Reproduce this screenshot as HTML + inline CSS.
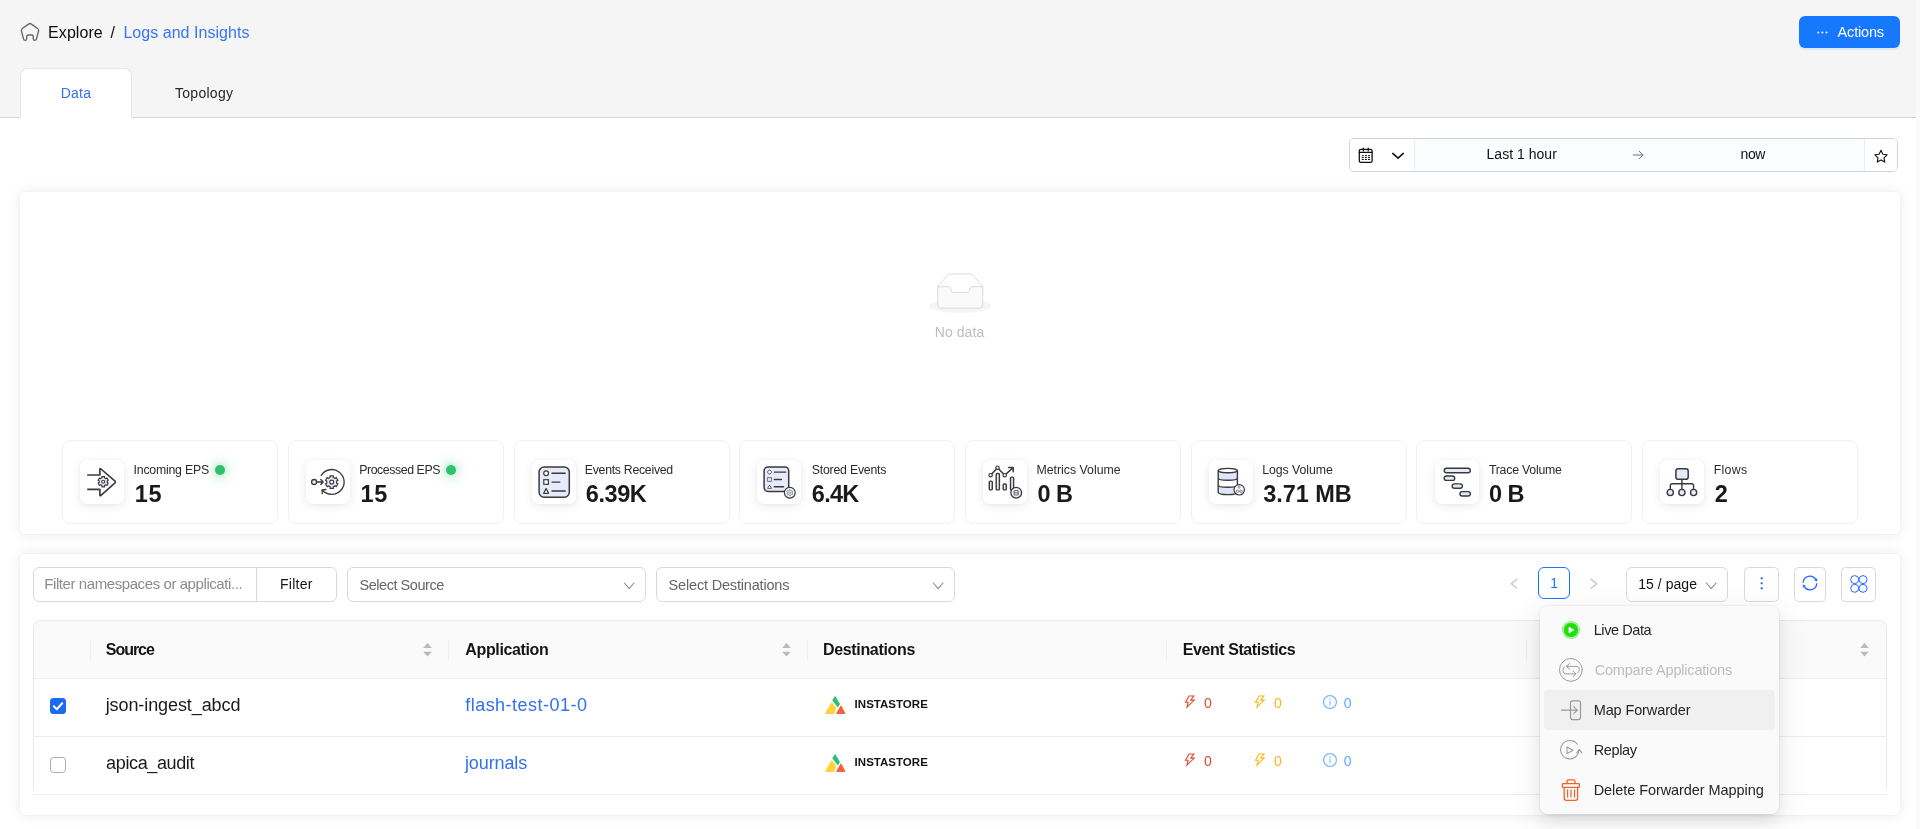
<!DOCTYPE html>
<html lang="en">
<head>
<meta charset="utf-8">
<title>Logs and Insights</title>
<style>
*{box-sizing:border-box;margin:0;padding:0}
html,body{width:1920px;height:829px;overflow:hidden;background:#fff}
body{font-family:"Liberation Sans",sans-serif;color:#1f1f1f;font-size:14px;position:relative}
#root{position:absolute;left:0;top:0;width:1920px;height:829px;will-change:transform}
.abs{position:absolute}
.t{position:absolute;white-space:nowrap;line-height:1}
#hdr{left:0;top:0;width:1920px;height:118px;background:#f5f5f5;border-bottom:1px solid #d4d4d4}
#actions{left:1799px;top:16px;width:101px;height:32px;background:#1677ff;border-radius:6px;box-shadow:0 2px 0 rgba(5,145,255,.1)}
#tab1{left:20px;top:68px;width:112px;height:50px;background:#fff;border:1px solid #e4e4e4;border-bottom:none;border-radius:8px 8px 0 0}
#dp{left:1349px;top:138px;width:549px;height:34px;border:1px solid #cbd3e8;border-radius:5px;background:#fbfcfe;overflow:hidden}
#dp .l{left:0;top:0;width:65px;height:32px;background:#fff;border-right:1px solid #e9ebf1}
#dp .r{left:514px;top:0;width:34px;height:32px;background:#fff;border-left:1px solid #ececec}
.card{background:#fff;border-radius:5px;box-shadow:0 0 14px rgba(0,0,0,.088),0 0 2px rgba(0,0,0,.07)}
#c1{left:20px;top:192px;width:1880px;height:342px}
#c2{left:20px;top:554px;width:1880px;height:261px}

.stat{position:absolute;top:440px;width:216px;height:84px;border:1px solid #f0f0f0;border-radius:8px;background:#fff}
.stat .ib{position:absolute;left:17px;top:19px;width:44px;height:44px;border-radius:7px;background:#fff;box-shadow:0 2px 10px rgba(0,0,0,.09),0 0 2px rgba(0,0,0,.04)}
.stat .ib svg{display:block}
.stat .lb{position:absolute;left:70.4px;top:22.6px;font-size:12.3px;line-height:1;color:#2b2b2b;white-space:nowrap}
.stat .vl{position:absolute;left:71.5px;top:42.0px;font-size:23.5px;line-height:1;font-weight:700;color:#1a1a1a;white-space:nowrap}
.dot{position:absolute;width:10.300px;height:10.300px;border-radius:50%;background:#2ec26d;box-shadow:0 0 12px 5px rgba(46,194,109,.16),0 0 5px 1px rgba(46,194,109,.20)}

.box{position:absolute;border:1px solid #d9d9d9;border-radius:6px;background:#fff}
#tbl{left:33px;top:620px;width:1854px;height:170px;border:1px solid #e6e8f3;border-bottom:none;border-radius:8px 8px 0 0}
#th{left:0;top:0;width:1852px;height:58px;background:#fafafa;border-bottom:1px solid #ededed;border-radius:7px 7px 0 0}
.hsep{position:absolute;top:17.5px;width:1px;height:22.5px;background:#f0f0f0}
.row{position:absolute;left:0;width:1852px;height:58px;border-bottom:1px solid #ededed;background:#fff}
.sorter{position:absolute;top:22px;width:9px;height:14px}
#dd{left:1540px;top:606px;width:239px;height:208px;background:#fafafa;border-radius:8px;box-shadow:0 6px 16px rgba(0,0,0,.08),0 3px 6px -4px rgba(0,0,0,.12),0 9px 28px 8px rgba(0,0,0,.05),0 0 3px rgba(0,0,0,.10)}
.mi{position:absolute;left:4px;width:231px;height:40px;border-radius:4px}
</style>
</head>
<body>
<div id="root">
<div id="hdr" class="abs"></div>
<div class="abs" style="left:1916px;top:0;width:4px;height:829px;background:#f9f9f9;z-index:50"></div>
<div id="tab1" class="abs"></div>
<svg class="abs" style="left:0;top:0" width="60" height="60" viewBox="0 0 60 60" fill="none" stroke="#646464" stroke-width="1.350" stroke-linejoin="round"><path d="M28.600 24.100Q30 23 31.400 24.100L37.400 28.300Q38.900 29.300 38.600 30.800L36.500 38.800Q36.100 40.400 34.700 40.400Q33.300 40.400 33.300 38.800L33.300 36.600Q33.300 35 31.700 35L28.300 35Q26.700 35 26.700 36.600L26.700 38.800Q26.700 40.400 25.300 40.400Q23.900 40.400 23.500 38.800L21.400 30.800Q21.100 29.300 22.600 28.300Z"/></svg>
<div class="t" style="left:48.1px;top:24.5px;font-size:16px;letter-spacing:0.06px;color:#0d0d0d;">Explore</div>
<div class="t" style="left:110.6px;top:24.5px;font-size:16px;color:#0d0d0d;">/</div>
<div class="t" style="left:123.4px;top:24.5px;font-size:16px;letter-spacing:0.04px;color:#3875f4;">Logs and Insights</div>
<div id="actions" class="abs"></div>
<svg class="abs" style="left:1814.600px;top:29px" width="16" height="8" viewBox="0 0 16 8"><circle cx="3.300" cy="3.500" r=".95" fill="#fff"/><circle cx="7.400" cy="3.500" r=".95" fill="#fff"/><circle cx="11.500" cy="3.500" r=".95" fill="#fff"/></svg>
<div class="t" style="left:1837.6px;top:25.2px;font-size:14.5px;letter-spacing:-0.17px;color:#fff;">Actions</div>
<div class="t" style="left:60.7px;top:86.1px;font-size:14px;letter-spacing:0.24px;color:#3570f2;">Data</div>
<div class="t" style="left:175.0px;top:86.1px;font-size:14px;letter-spacing:0.28px;color:#262626;">Topology</div>

<div id="dp" class="abs">
  <div class="l abs"></div><div class="r abs"></div>
  <svg class="abs" style="left:-.8px;top:.2px" width="66" height="32" viewBox="0 0 66 32" fill="none" stroke="#111" stroke-linecap="round" stroke-linejoin="round">
    <rect x="10.300" y="10.400" width="12.800" height="13" rx="1.600" stroke-width="1.300"/>
    <path d="M10.300 13.400h12.800M14.300 9.200v2.600M19.200 9.200v2.600" stroke-width="1.300"/>
    <path d="M12.800 16.700h2M15.900 16.700h2M19 16.700h2M12.800 18.600h2M15.900 18.600h2M19 18.600h2M12.800 20.500h2M15.900 20.500h2M19 20.500h2" stroke-width="1" stroke-linecap="butt"/>
    <path d="M43.800 14.400L49.050 19.100L54.300 14.400" stroke-width="1.550"/>
  </svg>
  <svg class="abs" style="left:281px;top:9px" width="14" height="14" viewBox="0 0 14 14" fill="none" stroke="#6b7280" stroke-width="1" stroke-linecap="round" stroke-linejoin="round"><path d="M2.200 7h9.800M8.200 3.200L12 7L8.200 10.800"/></svg>
  <svg class="abs" style="left:523px;top:10px" width="16" height="16" viewBox="0 0 16 16" fill="none" stroke="#111" stroke-width="1.100" stroke-linejoin="round"><path d="M8 1.300l1.850 3.950 4.250.550-3.100 3 .780 4.300L8 11l-3.780 2.100.780-4.300-3.100-3 4.250-.550z"/></svg>
</div>
<div class="t" style="left:1486.5px;top:147.1px;font-size:14px;letter-spacing:0.03px;color:#111;">Last 1 hour</div>
<div class="t" style="left:1740.6px;top:147.1px;font-size:14px;letter-spacing:-0.44px;color:#111;">now</div>

<div id="c1" class="abs card"></div>
<svg class="abs" style="left:928.800px;top:272.600px" width="62.440" height="40" viewBox="0 0 64 41"><g transform="translate(0 1)" fill="none" fill-rule="evenodd"><ellipse fill="#f5f5f5" cx="32" cy="33" rx="32" ry="7"/><g fill-rule="nonzero" stroke="#d9d9d9"><path d="M55 12.760L44.854 1.258C44.367.474 43.656 0 42.907 0H21.093c-.749 0-1.460.474-1.947 1.257L9 12.761V22h46v-9.240z"/><path d="M41.613 15.931c0-1.605.994-2.930 2.227-2.931H55v18.137C55 33.260 53.680 35 52.050 35h-40.100C10.320 35 9 33.259 9 31.137V13h11.160c1.233 0 2.227 1.323 2.227 2.928v.022c0 1.605 1.005 2.901 2.237 2.901h14.752c1.232 0 2.237-1.308 2.237-2.913v-.007z" fill="#fafafa"/></g></g></svg>
<div class="t" style="left:934.8px;top:325.1px;font-size:14px;letter-spacing:0.06px;color:#bdbdbd;">No data</div>
<div class="stat" style="left:62px"><div class="ib" style="left:17px"><svg width="44" height="44" viewBox="0 0 44 44"><path d="M7.200 15H19.900V9.400Q19.900 8 21 9L35 21.200Q35.800 22 35 22.800L21 35.300Q19.900 36.200 19.900 34.900V29.300H7.200" stroke="#3a3a3a" stroke-width="1.650" fill="none" stroke-linejoin="round" stroke-linecap="butt"/>
<path d="M21.79 16.59L24.61 16.59L24.43 17.79L25.98 18.68L26.92 17.92L28.33 20.37L27.20 20.81L27.20 22.59L28.33 23.03L26.92 25.48L25.98 24.72L24.43 25.61L24.61 26.81L21.79 26.81L21.97 25.61L20.42 24.72L19.48 25.48L18.07 23.03L19.20 22.59L19.20 20.81L18.07 20.37L19.48 17.92L20.42 18.68L21.97 17.79Z" fill="#e6ebfc" stroke="#3a3a3a" stroke-width="1.150" stroke-linejoin="round"/><circle cx="23.200" cy="21.700" r="1.500" fill="#fff" stroke="#3a3a3a" stroke-width="1.100"/></svg></div><div class="lb" style="left:70.6px;letter-spacing:-0.22px">Incoming EPS</div><div class="dot" style="left:151.8px;top:23.800px"></div><div class="vl" style="left:71.8px;letter-spacing:0.63px">15</div></div>
<div class="stat" style="left:288px"><div class="ib" style="left:17px"><svg width="44" height="44" viewBox="0 0 44 44"><circle cx="8.100" cy="22" r="2.500" fill="#e6ebfc" stroke="#3a3a3a" stroke-width="1.300"/>
<path d="M10.800 22H17M14.800 19.600L17.200 22L14.800 24.400" stroke="#3a3a3a" stroke-width="1.400" fill="none" stroke-linejoin="round" stroke-linecap="round"/>
<path d="M15.200 15.400A12.400 12.400 0 1 1 16.300 30" stroke="#3a3a3a" stroke-width="1.300" fill="none" stroke-linecap="round"/>
<path d="M19.900 29.500L16.100 29.800L16.200 33.700" stroke="#3a3a3a" stroke-width="1.300" fill="none" stroke-linecap="round" stroke-linejoin="round"/>
<path d="M23.97 15.84L27.43 15.84L27.19 17.33L29.08 18.42L30.26 17.47L31.99 20.47L30.58 21.01L30.58 23.19L31.99 23.73L30.26 26.73L29.08 25.78L27.19 26.87L27.43 28.36L23.97 28.36L24.21 26.87L22.32 25.78L21.14 26.73L19.41 23.73L20.82 23.19L20.82 21.01L19.41 20.47L21.14 17.47L22.32 18.42L24.21 17.33Z" fill="#e6ebfc" stroke="#3a3a3a" stroke-width="1.200" stroke-linejoin="round"/><circle cx="25.700" cy="22.100" r="2" fill="#fff" stroke="#3a3a3a" stroke-width="1.100"/></svg></div><div class="lb" style="left:70.2px;letter-spacing:-0.41px">Processed EPS</div><div class="dot" style="left:157.1px;top:23.800px"></div><div class="vl" style="left:71.5px;letter-spacing:0.63px">15</div></div>
<div class="stat" style="left:514px"><div class="ib" style="left:17px"><svg width="44" height="44" viewBox="0 0 44 44"><rect x="7.100" y="7" width="30.200" height="30.200" rx="5" fill="#e6ebfc" stroke="#3a3a3a" stroke-width="1.500"/>
<circle cx="14.100" cy="13.300" r="2.400" fill="#fff" stroke="#3a3a3a" stroke-width="1.200"/>
<rect x="11.800" y="19.700" width="4.600" height="4.600" fill="#fff" stroke="#3a3a3a" stroke-width="1.200"/>
<path d="M14.100 28.600L16.600 33.300H11.600Z" fill="#fff" stroke="#3a3a3a" stroke-width="1.200" stroke-linejoin="round"/>
<path d="M20 13.300H33.200M20 22.100H27.800M20 31H33.200" stroke="#3a3a3a" stroke-width="1.400" stroke-linecap="round"/></svg></div><div class="lb" style="left:69.8px;letter-spacing:-0.28px">Events Received</div><div class="vl" style="left:70.8px;letter-spacing:-0.43px">6.39K</div></div>
<div class="stat" style="left:739px"><div class="ib" style="left:17px"><svg width="44" height="44" viewBox="0 0 44 44"><rect x="7.100" y="7" width="24.600" height="24.400" rx="3.800" fill="#e6ebfc" stroke="#3a3a3a" stroke-width="1.500"/>
<circle cx="12.500" cy="12.100" r="1.900" fill="#fff" stroke="#555" stroke-width=".9"/>
<rect x="10.700" y="17.700" width="3.600" height="3.600" fill="#fff" stroke="#555" stroke-width=".9"/>
<path d="M12.500 25L14.500 28.400H10.500Z" fill="#fff" stroke="#555" stroke-width=".9" stroke-linejoin="round"/>
<path d="M17.300 12.100H28.700M17.300 19.500H24.400M17.300 26.800H26.500" stroke="#3a3a3a" stroke-width="1.400" stroke-linecap="round"/>
<circle cx="32.800" cy="32.700" r="5.400" fill="#fff" stroke="#3a3a3a" stroke-width="1.200"/>
<path d="M31.95 29.62L33.65 29.62L33.52 30.41L34.42 30.93L35.04 30.42L35.90 31.90L35.14 32.18L35.14 33.22L35.90 33.50L35.04 34.98L34.42 34.47L33.52 34.99L33.65 35.78L31.95 35.78L32.08 34.99L31.18 34.47L30.56 34.98L29.70 33.50L30.46 33.22L30.46 32.18L29.70 31.90L30.56 30.42L31.18 30.93L32.08 30.41Z" fill="#e6ebfc" stroke="#777" stroke-width=".7" stroke-linejoin="round"/><circle cx="32.800" cy="32.700" r=".9" fill="#fff" stroke="#777" stroke-width=".6"/></svg></div><div class="lb" style="left:71.8px;letter-spacing:-0.22px">Stored Events</div><div class="vl" style="left:71.8px;letter-spacing:-0.72px">6.4K</div></div>
<div class="stat" style="left:965px"><div class="ib" style="left:17px"><svg width="44" height="44" viewBox="0 0 44 44"><rect x="6.300" y="21.100" width="3" height="8.800" rx="1" fill="#e6ebfc" stroke="#3a3a3a" stroke-width="1.400"/>
<rect x="13.200" y="13.500" width="3.200" height="16.400" rx="1" fill="#e6ebfc" stroke="#3a3a3a" stroke-width="1.400"/>
<rect x="20.200" y="24" width="3.100" height="5.900" rx="1" fill="#e6ebfc" stroke="#3a3a3a" stroke-width="1.400"/>
<rect x="27.500" y="17.100" width="3.100" height="12.800" rx="1" fill="#e6ebfc" stroke="#3a3a3a" stroke-width="1.400"/>
<path d="M8.700 14.100L13.400 8.900M15.700 8.900L20.600 14.100M22.900 14.100L30 7.700M25.700 7.500H30.200V11.800" stroke="#3a3a3a" stroke-width="1.500" fill="none" stroke-linecap="round" stroke-linejoin="round"/>
<circle cx="7.600" cy="15.200" r="1.700" fill="#fff" stroke="#3a3a3a" stroke-width="1.200"/><circle cx="14.500" cy="7.700" r="1.700" fill="#fff" stroke="#3a3a3a" stroke-width="1.200"/><circle cx="21.700" cy="15.200" r="1.700" fill="#fff" stroke="#3a3a3a" stroke-width="1.200"/>
<circle cx="33.200" cy="32.700" r="5.400" fill="#e6ebfc" stroke="#3a3a3a" stroke-width="1.300"/>
<path d="M31.200 30.700h4v4.200h-4zM31.200 32.800h4" fill="#fff" stroke="#555" stroke-width=".9" stroke-linejoin="round"/></svg></div><div class="lb" style="left:70.5px;letter-spacing:0.00px">Metrics Volume</div><div class="vl" style="left:71.5px;letter-spacing:-0.55px">0 B</div></div>
<div class="stat" style="left:1191px"><div class="ib" style="left:17px"><svg width="44" height="44" viewBox="0 0 44 44"><path d="M9.200 10.600V32.200C9.200 33.600 13.500 34.600 18.800 34.600S28.400 33.600 28.400 32.200V10.600" fill="#fff" stroke="none"/>
<path d="M9.200 11V18C9.200 19.300 13.500 20.300 18.800 20.300S28.400 19.300 28.400 18V11C28.400 12.300 24 13.100 18.800 13.100S9.200 12.300 9.200 11Z" fill="#dfe6fa"/>
<path d="M9.200 25V32.200C9.200 33.600 13.500 34.600 18.800 34.600S28.400 33.600 28.400 32.200V25C28.400 26.300 24 27.300 18.800 27.300S9.200 26.300 9.200 25Z" fill="#dfe6fa"/>
<ellipse cx="18.800" cy="10.600" rx="9.600" ry="2.200" fill="#fff" stroke="#3a3a3a" stroke-width="1.400"/>
<path d="M9.200 10.600V32.200C9.200 33.600 13.500 34.600 18.800 34.600S28.400 33.600 28.400 32.200V10.600M9.200 18C9.200 19.300 13.500 20.300 18.800 20.300S28.400 19.300 28.400 18M9.200 25C9.200 26.300 13.500 27.300 18.800 27.300S28.400 26.300 28.400 25" fill="none" stroke="#3a3a3a" stroke-width="1.400"/>
<circle cx="30.200" cy="29.800" r="5.200" fill="#fff" stroke="#3a3a3a" stroke-width="1.200"/>
<circle cx="30.200" cy="27.300" r="1" fill="#e6ebfc" stroke="#666" stroke-width=".7"/><circle cx="28.400" cy="31.200" r="1.300" fill="#e6ebfc" stroke="#666" stroke-width=".7"/><circle cx="32" cy="31.200" r="1.300" fill="#e6ebfc" stroke="#666" stroke-width=".7"/><path d="M29.700 31.200h1" stroke="#666" stroke-width=".7"/></svg></div><div class="lb" style="left:70.2px;letter-spacing:-0.05px">Logs Volume</div><div class="vl" style="left:71.2px;letter-spacing:-0.06px">3.71 MB</div></div>
<div class="stat" style="left:1416px"><div class="ib" style="left:18px"><svg width="44" height="44" viewBox="0 0 44 44"><rect x="9.200" y="8.200" width="26.100" height="4.600" rx="2.300" fill="#e6ebfc" stroke="#3a3a3a" stroke-width="1.400"/>
<rect x="9.200" y="16" width="10.500" height="4.400" rx="2.200" fill="#e6ebfc" stroke="#3a3a3a" stroke-width="1.400"/>
<rect x="17.200" y="23.900" width="10.200" height="4.400" rx="2.200" fill="#e6ebfc" stroke="#3a3a3a" stroke-width="1.400"/>
<rect x="24.900" y="31.600" width="10.400" height="4.400" rx="2.200" fill="#e6ebfc" stroke="#3a3a3a" stroke-width="1.400"/></svg></div><div class="lb" style="left:71.9px;letter-spacing:-0.22px">Trace Volume</div><div class="vl" style="left:72.0px;letter-spacing:-0.55px">0 B</div></div>
<div class="stat" style="left:1642px"><div class="ib" style="left:17px"><svg width="44" height="44" viewBox="0 0 44 44"><path d="M21.900 19.500V29.200M10.300 29.200V25.800Q10.300 23.800 12.300 23.800H31.600Q33.600 23.800 33.600 25.800V29.200" fill="none" stroke="#3a3a3a" stroke-width="1.400"/>
<rect x="15.900" y="8.700" width="12.300" height="10.600" rx="2.400" fill="#e6ebfc" stroke="#3a3a3a" stroke-width="1.500"/>
<circle cx="10.300" cy="32.500" r="3.100" fill="#e6ebfc" stroke="#3a3a3a" stroke-width="1.400"/><circle cx="21.900" cy="32.500" r="3.100" fill="#e6ebfc" stroke="#3a3a3a" stroke-width="1.400"/><circle cx="33.600" cy="32.500" r="3.100" fill="#e6ebfc" stroke="#3a3a3a" stroke-width="1.400"/></svg></div><div class="lb" style="left:70.7px;letter-spacing:0.31px">Flows</div><div class="vl" style="left:71.7px;letter-spacing:-0.50px">2</div></div>

<div id="c2" class="abs card"></div>
<!-- controls -->
<div class="box" style="left:33px;top:567px;width:224px;height:35px;border-radius:6px 0 0 6px"></div>
<div class="box" style="left:256px;top:567px;width:81px;height:35px;border-radius:0 6px 6px 0"></div>
<div class="t" style="left:44.3px;top:576.1px;font-size:15px;letter-spacing:-0.42px;color:#8b8b8b;">Filter namespaces or applicati...</div>
<div class="t" style="left:280.0px;top:577.1px;font-size:14px;letter-spacing:0.25px;color:#141414;">Filter</div>
<div class="box" style="left:347px;top:567px;width:298.500px;height:35px"></div>
<div class="t" style="left:359.5px;top:577.7px;font-size:14.5px;letter-spacing:-0.46px;color:#666;">Select Source</div>
<svg class="abs" style="left:623px;top:581px" width="12" height="10" viewBox="0 0 12 10" fill="none" stroke="#8c8c8c" stroke-width="1.100" stroke-linecap="round" stroke-linejoin="round"><path d="M1.400 2L6.200 7.600L11 2"/></svg>
<div class="box" style="left:656px;top:567px;width:298.500px;height:35px"></div>
<div class="t" style="left:668.6px;top:577.7px;font-size:14.5px;letter-spacing:-0.18px;color:#666;">Select Destinations</div>
<svg class="abs" style="left:932px;top:581px" width="12" height="10" viewBox="0 0 12 10" fill="none" stroke="#8c8c8c" stroke-width="1.100" stroke-linecap="round" stroke-linejoin="round"><path d="M1.400 2L6.200 7.600L11 2"/></svg>

<svg class="abs" style="left:1508px;top:576px" width="12" height="16" viewBox="0 0 12 16" fill="none" stroke="#bfbfbf" stroke-width="1.100" stroke-linecap="round" stroke-linejoin="round"><path d="M9 3.200L3.200 7.800L9 12.400"/></svg>
<div class="box" style="left:1538px;top:567px;width:32px;height:32px;border-color:#1677ff"></div>
<div class="t" style="left:1550.3px;top:576.1px;font-size:14px;color:#1677ff;">1</div>
<svg class="abs" style="left:1588px;top:576px" width="12" height="16" viewBox="0 0 12 16" fill="none" stroke="#bfbfbf" stroke-width="1.100" stroke-linecap="round" stroke-linejoin="round"><path d="M3 3.200L8.800 7.800L3 12.400"/></svg>
<div class="box" style="left:1626px;top:567px;width:101.500px;height:35px"></div>
<div class="t" style="left:1638.2px;top:576.9px;font-size:14px;letter-spacing:0.05px;color:#141414;">15 / page</div>
<svg class="abs" style="left:1705px;top:581px" width="12" height="10" viewBox="0 0 12 10" fill="none" stroke="#8c8c8c" stroke-width="1.100" stroke-linecap="round" stroke-linejoin="round"><path d="M1.400 2L6.200 7.600L11 2"/></svg>
<div class="box" style="left:1744px;top:567px;width:35px;height:35px;border-radius:4.500px"></div>
<svg class="abs" style="left:1755px;top:575px" width="12" height="18" viewBox="0 0 12 18"><circle cx="6.700" cy="3.300" r="1.150" fill="#1d63ff"/><circle cx="6.700" cy="8.300" r="1.150" fill="#1d63ff"/><circle cx="6.700" cy="13.300" r="1.150" fill="#1d63ff"/></svg>
<div class="box" style="left:1794px;top:567px;width:32px;height:35px;border-radius:4.500px"></div>
<svg class="abs" style="left:1800px;top:574px" width="20" height="20" viewBox="0 0 20 20" fill="none" stroke="#2468ff" stroke-width="1.300" stroke-linecap="butt"><path d="M3.20 8.76A6.8 6.8 0 0 1 15.77 5.40M16.80 9.24A6.8 6.8 0 0 1 4.23 12.60"/><path d="M17.14 7.60L17.22 4.14L14.00 6.15ZM2.86 10.40L2.78 13.86L6.00 11.85Z" fill="#2468ff" stroke="none"/></svg>
<div class="box" style="left:1841px;top:567px;width:35px;height:35px;border-radius:4.500px"></div>
<svg class="abs" style="left:1848px;top:574px" width="20" height="20" viewBox="0 0 20 20" fill="none" stroke="#2468ff" stroke-width="1"><circle cx="6.700" cy="5.600" r="4"/><circle cx="15" cy="5.600" r="4"/><circle cx="6.700" cy="14.300" r="4"/><circle cx="15" cy="14.300" r="4"/></svg>

<!-- table -->
<div id="tbl" class="abs">
  <div id="th" class="abs"></div>
  <div class="hsep" style="left:55.500px"></div><div class="hsep" style="left:414.300px"></div><div class="hsep" style="left:773.300px"></div><div class="hsep" style="left:1132.300px"></div><div class="hsep" style="left:1491.500px"></div>
  <svg class="sorter" style="left:388.500px" viewBox="0 0 9 14"><path d="M4.500 0L8.800 5H.2Z" fill="#b9b9b9"/><path d="M4.500 13.500L8.800 8.700H.2Z" fill="#b9b9b9"/></svg>
  <svg class="sorter" style="left:747.500px" viewBox="0 0 9 14"><path d="M4.500 0L8.800 5H.2Z" fill="#b9b9b9"/><path d="M4.500 13.500L8.800 8.700H.2Z" fill="#b9b9b9"/></svg>
  <svg class="sorter" style="left:1825.500px" viewBox="0 0 9 14"><path d="M4.500 0L8.800 5H.2Z" fill="#b9b9b9"/><path d="M4.500 13.500L8.800 8.700H.2Z" fill="#b9b9b9"/></svg>
  <div class="row" style="top:58px"></div>
  <div class="row" style="top:116px"></div>
</div>
<div class="t" style="left:105.8px;top:642.1px;font-size:16px;font-weight:700;letter-spacing:-1.03px;color:#141414;">Source</div>
<div class="t" style="left:465.3px;top:642.1px;font-size:16px;font-weight:700;letter-spacing:-0.36px;color:#141414;">Application</div>
<div class="t" style="left:823.0px;top:642.1px;font-size:16px;font-weight:700;letter-spacing:-0.34px;color:#141414;">Destinations</div>
<div class="t" style="left:1182.7px;top:642.1px;font-size:16px;font-weight:700;letter-spacing:-0.42px;color:#141414;">Event Statistics</div>
<div class="abs" style="left:50px;top:698px;width:16px;height:16px;border-radius:3.500px;background:#1a6bf2"></div><svg class="abs" style="left:50px;top:698px" width="16" height="16" viewBox="0 0 16 16" fill="none" stroke="#fff" stroke-width="2" stroke-linecap="round" stroke-linejoin="round"><path d="M3.800 8.300L6.800 11.200L12.200 5.300"/></svg>
<div class="t" style="left:105.7px;top:695.5px;font-size:18px;letter-spacing:-0.09px;color:#1a1a1a;">json-ingest_abcd</div>
<div class="t" style="left:465.2px;top:695.5px;font-size:18px;letter-spacing:0.48px;color:#3370ef;">flash-test-01-0</div>
<svg class="abs" style="left:824.500px;top:695.8px" width="21" height="19" viewBox="0 0 21 19"><path d="M9.600 .5Q10.100 -.1 10.500 .6L14.700 7.400Q15 7.900 14.700 8.400L13.200 11.100Q12.800 11.700 12.400 11.100L7.600 4.700Q7.300 4.200 7.600 3.700Z" fill="#2fbf71"/><path d="M6.300 6.600Q6.800 5.800 7.300 6.500L11 12.100Q11.300 12.600 11 13.100L9 17.400Q8.700 17.900 8.100 17.900H.9Q-.2 17.900 .3 16.900Z" fill="#fed13d"/><path d="M15.500 9.800Q16 9.100 16.400 9.800L20.200 17Q20.600 17.900 19.700 17.900H11.800Q10.800 17.900 11.300 17Z" fill="#f1643a"/></svg>
<div class="t" style="left:854.6px;top:699.1px;font-size:11.5px;font-weight:700;letter-spacing:0.02px;color:#141414;">INSTASTORE</div>
<svg class="abs" style="left:1183.1px;top:694.8px" width="14" height="14" viewBox="64 64 896 896" fill="#e24a2e"><path d="M848 359.300H627.700L825.800 109c4.100-5.300.400-13-6.300-13H436c-2.800 0-5.500 1.500-6.900 4L170 547.500c-3.100 5.300.700 12 6.900 12h174.400l-89.400 357.600c-1.900 7.800 7.500 13.300 13.300 7.700L853.500 373c5.200-4.900 1.700-13.700-5.500-13.700zM378.200 732.500l60.300-241H281.100l189.600-327.400h224.600L487 427.400h211L378.200 732.500z"/></svg>
<svg class="abs" style="left:1252.8px;top:694.8px" width="14" height="14" viewBox="64 64 896 896" fill="#fbb616"><path d="M848 359.300H627.700L825.800 109c4.100-5.300.400-13-6.300-13H436c-2.800 0-5.500 1.500-6.900 4L170 547.500c-3.100 5.300.700 12 6.900 12h174.400l-89.400 357.600c-1.900 7.800 7.500 13.300 13.300 7.700L853.500 373c5.200-4.900 1.700-13.700-5.500-13.700zM378.200 732.500l60.300-241H281.100l189.600-327.400h224.600L487 427.400h211L378.200 732.500z"/></svg>
<div class="t" style="left:1204.0px;top:696.0px;font-size:14px;color:#e24a2e;">0</div>
<div class="t" style="left:1274.0px;top:696.0px;font-size:14px;color:#fbb616;">0</div>
<svg class="abs" style="left:1323px;top:695px" width="14" height="14" viewBox="64 64 896 896" fill="#72b5ff"><path d="M512 64C264.600 64 64 264.600 64 512s200.600 448 448 448 448-200.600 448-448S759.400 64 512 64zm0 820c-205.400 0-372-166.600-372-372s166.600-372 372-372 372 166.600 372 372-166.600 372-372 372z"/><path d="M464 336a48 48 0 1096 0 48 48 0 10-96 0zm72 112h-48c-4.400 0-8 3.600-8 8v272c0 4.400 3.600 8 8 8h48c4.400 0 8-3.600 8-8V456c0-4.400-3.600-8-8-8z"/></svg>
<div class="t" style="left:1343.7px;top:696.0px;font-size:14px;color:#62abfd;">0</div>
<div class="abs" style="left:50px;top:756.5px;width:16px;height:16px;border-radius:3.500px;background:#fff;border:1px solid #ababab"></div>
<div class="t" style="left:106.1px;top:753.5px;font-size:18px;letter-spacing:-0.37px;color:#1a1a1a;">apica_audit</div>
<div class="t" style="left:465.0px;top:753.5px;font-size:18px;letter-spacing:-0.13px;color:#3370ef;">journals</div>
<svg class="abs" style="left:824.500px;top:753.8px" width="21" height="19" viewBox="0 0 21 19"><path d="M9.600 .5Q10.100 -.1 10.500 .6L14.700 7.400Q15 7.900 14.700 8.400L13.200 11.100Q12.800 11.700 12.400 11.100L7.600 4.700Q7.300 4.200 7.600 3.700Z" fill="#2fbf71"/><path d="M6.300 6.600Q6.800 5.800 7.300 6.500L11 12.100Q11.300 12.600 11 13.100L9 17.400Q8.700 17.900 8.100 17.900H.9Q-.2 17.900 .3 16.900Z" fill="#fed13d"/><path d="M15.500 9.800Q16 9.100 16.400 9.800L20.200 17Q20.600 17.900 19.700 17.900H11.800Q10.800 17.900 11.300 17Z" fill="#f1643a"/></svg>
<div class="t" style="left:854.6px;top:757.1px;font-size:11.5px;font-weight:700;letter-spacing:0.02px;color:#141414;">INSTASTORE</div>
<svg class="abs" style="left:1183.1px;top:752.8px" width="14" height="14" viewBox="64 64 896 896" fill="#e24a2e"><path d="M848 359.300H627.700L825.800 109c4.100-5.300.400-13-6.300-13H436c-2.800 0-5.500 1.500-6.900 4L170 547.500c-3.100 5.300.700 12 6.900 12h174.400l-89.400 357.600c-1.900 7.800 7.500 13.300 13.300 7.700L853.500 373c5.200-4.900 1.700-13.700-5.500-13.700zM378.200 732.500l60.300-241H281.100l189.600-327.400h224.600L487 427.400h211L378.200 732.500z"/></svg>
<svg class="abs" style="left:1252.8px;top:752.8px" width="14" height="14" viewBox="64 64 896 896" fill="#fbb616"><path d="M848 359.300H627.700L825.800 109c4.100-5.300.400-13-6.300-13H436c-2.800 0-5.500 1.500-6.900 4L170 547.500c-3.100 5.300.700 12 6.900 12h174.400l-89.400 357.600c-1.900 7.800 7.500 13.300 13.300 7.700L853.500 373c5.200-4.900 1.700-13.700-5.500-13.700zM378.200 732.500l60.300-241H281.100l189.600-327.400h224.600L487 427.400h211L378.200 732.500z"/></svg>
<div class="t" style="left:1204.0px;top:754.0px;font-size:14px;color:#e24a2e;">0</div>
<div class="t" style="left:1274.0px;top:754.0px;font-size:14px;color:#fbb616;">0</div>
<svg class="abs" style="left:1323px;top:753px" width="14" height="14" viewBox="64 64 896 896" fill="#72b5ff"><path d="M512 64C264.600 64 64 264.600 64 512s200.600 448 448 448 448-200.600 448-448S759.400 64 512 64zm0 820c-205.400 0-372-166.600-372-372s166.600-372 372-372 372 166.600 372 372-166.600 372-372 372z"/><path d="M464 336a48 48 0 1096 0 48 48 0 10-96 0zm72 112h-48c-4.400 0-8 3.600-8 8v272c0 4.400 3.600 8 8 8h48c4.400 0 8-3.600 8-8V456c0-4.400-3.600-8-8-8z"/></svg>
<div class="t" style="left:1343.7px;top:754.0px;font-size:14px;color:#62abfd;">0</div>

<!-- dropdown -->
<div id="dd" class="abs">
  <div class="mi" style="top:84px;background:#f0f0f0"></div>
</div>

<svg class="abs" style="left:1561px;top:620px" width="20" height="20" viewBox="0 0 20 20"><circle cx="10" cy="10" r="9" fill="#7eea76"/><circle cx="10" cy="10" r="7.800" fill="none" stroke="#d4f8d0" stroke-width=".7"/><circle cx="10" cy="10" r="7.100" fill="#1fe00c"/><path d="M8 7.200V12.800L12.800 10Z" fill="#fff" stroke="#fff" stroke-width=".8" stroke-linejoin="round"/></svg>
<svg class="abs" style="left:1558px;top:657px" width="26" height="26" viewBox="0 0 26 26" fill="none" stroke="#9c9c9c" stroke-width="1" stroke-linecap="round" stroke-linejoin="round"><circle cx="12.900" cy="12.900" r="11.400"/><path d="M8.200 9.400H18.200Q21.500 9.600 21.300 12.600Q21.100 14.800 19.800 15.900M11.500 6.600L8.200 9.400L11.500 12.200M17.800 16.900H7.900Q4.700 16.700 4.900 13.600Q5.100 11.400 6.100 10.300M15.100 14.100L17.800 16.900L15.100 19.700"/></svg>
<svg class="abs" style="left:1560px;top:699px" width="24" height="22" viewBox="0 0 24 22" fill="none" stroke="#999" stroke-width="1.150" stroke-linecap="round" stroke-linejoin="round"><rect x="10.500" y="1.800" width="10" height="18.800" rx="2"/><path d="M1.500 11.100H17.200M13.700 7.600L17.400 11.100L13.700 14.600"/></svg>
<svg class="abs" style="left:1558px;top:738px" width="26" height="24" viewBox="0 0 26 24" fill="none" stroke="#999" stroke-width="1.050" stroke-linecap="round" stroke-linejoin="round"><path d="M19.300 6.300A9.200 9.200 0 1 0 20.900 13.200"/><path d="M18.700 15L21.400 11.300L23.900 15"/><path d="M9 9V15.600L15 12.300Z"/></svg>
<svg class="abs" style="left:1560px;top:777px" width="22" height="26" viewBox="0 0 22 26" fill="none" stroke="#f0622d" stroke-width="1.300" stroke-linejoin="round"><rect x="2.400" y="6.700" width="17" height="3.600" rx=".6"/><path d="M7 6.500V4.200Q7 2.800 8.400 2.800H13.600Q15 2.800 15 4.200V6.500"/><path d="M4.200 10.500V21.300Q4.200 23.400 6.300 23.400H15.500Q17.600 23.400 17.600 21.300V10.500"/><path d="M7.600 12.400V20.600M11 12.400V20.600M14.500 12.400V20.600" stroke-width="1.200"/></svg>

<div class="t" style="left:1593.7px;top:622.7px;font-size:14.5px;letter-spacing:-0.42px;color:#262626;">Live Data</div>
<div class="t" style="left:1594.7px;top:662.7px;font-size:14.5px;letter-spacing:-0.19px;color:#bdbdbd;">Compare Applications</div>
<div class="t" style="left:1593.7px;top:702.7px;font-size:14.5px;letter-spacing:-0.12px;color:#262626;">Map Forwarder</div>
<div class="t" style="left:1593.7px;top:742.7px;font-size:14.5px;letter-spacing:-0.38px;color:#262626;">Replay</div>
<div class="t" style="left:1593.7px;top:782.7px;font-size:14.5px;letter-spacing:-0.07px;color:#262626;">Delete Forwarder Mapping</div>
</div>
</body>
</html>
